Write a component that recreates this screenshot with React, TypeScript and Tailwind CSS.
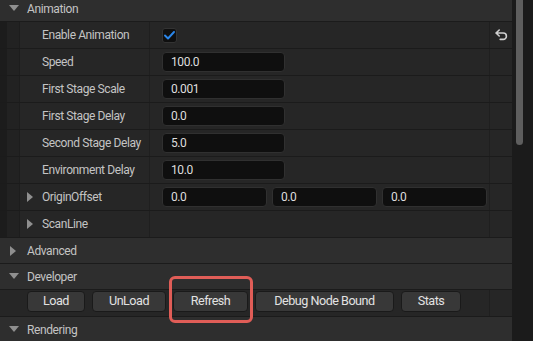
import React from "react";

const font = { fontFamily: "Roboto, 'Noto Sans', Arial, sans-serif" };

function TriDown() {
  return (
    <svg width="10" height="7" viewBox="0 0 10 7">
      <polygon points="0,0 10,0 5,6" fill="#8f8f8f" />
    </svg>
  );
}

function TriRight() {
  return (
    <svg width="7" height="10" viewBox="0 0 7 10">
      <polygon points="0,0 6,5 0,10" fill="#8f8f8f" />
    </svg>
  );
}

function ResetIcon() {
  return (
    <svg width="13" height="12" viewBox="0 0 13 12" fill="none">
      <path
        d="M4.2 1 L1 4 L4.2 7 M1.2 4 H8.2 A3.2 3.2 0 0 1 8.2 10.4 H5.2"
        stroke="#d0d0d0"
        strokeWidth="1.6"
        strokeLinecap="round"
        strokeLinejoin="round"
      />
    </svg>
  );
}

function Header({ title, open }: { title: string; open: boolean }) {
  return (
    <div className="flex items-center h-[26px] shrink-0 bg-[#2e2e2e] border-b border-[#1b1b1b]">
      <div className="w-[27px] flex justify-center">{open ? <TriDown /> : <TriRight />}</div>
      <span className="text-[12px] tracking-[-0.4px] text-[#c4c4c4]">{title}</span>
    </div>
  );
}

function Input({ value, w }: { value: string; w: string }) {
  return (
    <div
      className={`${w} h-[20px] flex items-center pl-[8px] rounded-[4px] bg-[#0f0f0f] border border-[#303030] text-[12px] tracking-[-0.4px] text-[#dedede]`}
    >
      {value}
    </div>
  );
}

function Row({
  label,
  expander,
  reset,
  children,
}: {
  label: string;
  expander?: boolean;
  reset?: boolean;
  children?: React.ReactNode;
}) {
  return (
    <div className="flex h-[27px] shrink-0 border-b border-[#1b1b1b]">
      <div className="w-[7px] bg-[#1c1c1c]" />
      <div className="w-[13px] bg-[#222222] border-r border-[#1d1d1d]" />
      <div className="w-[130px] flex items-center pl-[7px] bg-[#262626] border-r border-[#1f1f1f]">
        <div className="w-[15px] flex items-center">{expander && <TriRight />}</div>
        <span className="text-[12px] tracking-[-0.4px] text-[#c4c4c4] whitespace-nowrap">{label}</span>
      </div>
      <div className="w-[340px] flex items-center pl-[12px] gap-[5px] bg-[#262626] border-r border-[#1f1f1f]">
        {children}
      </div>
      <div className="w-[22px] flex items-center justify-center bg-[#262626]">
        {reset && <ResetIcon />}
      </div>
    </div>
  );
}

function Btn({ label, w, highlight }: { label: string; w: string; highlight?: boolean }) {
  return (
    <div className="relative">
      <div
        className={`${w} h-[21px] flex items-center justify-center rounded-[4px] bg-[#383838] border border-[#1a1a1a] text-[12.6px] tracking-[-0.5px] text-[#e2e2e2] whitespace-nowrap`}
      >
        {label}
      </div>
      {highlight && (
        <div className="absolute top-[-15px] bottom-[-11px] left-[-4px] right-[-5px] rounded-[6px] border-[3px] border-[#e05d57]" />
      )}
    </div>
  );
}

export default function App() {
  return (
    <div className="w-[533px] h-[341px] overflow-hidden flex bg-[#1b1b1b]" style={font}>
      <div className="w-[512px] flex flex-col">
        <div className="mt-[-4px]">
          <Header title="Animation" open />
        </div>
        <Row label="Enable Animation" reset>
          <div className="w-[15px] h-[15px] rounded-[3px] bg-[#0f0f0f] border border-[#333] flex items-center justify-center">
            <svg width="11" height="9" viewBox="0 0 11 9" fill="none">
              <path d="M1 4.5 L4 7.5 L10 1" stroke="#2a86ea" strokeWidth="1.9" strokeLinecap="round" strokeLinejoin="round" />
            </svg>
          </div>
        </Row>
        <Row label="Speed">
          <Input value="100.0" w="w-[123px]" />
        </Row>
        <Row label="First Stage Scale">
          <Input value="0.001" w="w-[123px]" />
        </Row>
        <Row label="First Stage Delay">
          <Input value="0.0" w="w-[123px]" />
        </Row>
        <Row label="Second Stage Delay">
          <Input value="5.0" w="w-[123px]" />
        </Row>
        <Row label="Environment Delay">
          <Input value="10.0" w="w-[123px]" />
        </Row>
        <Row label="OriginOffset" expander>
          <Input value="0.0" w="w-[105px]" />
          <Input value="0.0" w="w-[105px]" />
          <Input value="0.0" w="w-[105px]" />
        </Row>
        <Row label="ScanLine" expander />
        <Header title="Advanced" open={false} />
        <Header title="Developer" open />
        <div className="flex h-[27px] shrink-0 border-b border-[#1b1b1b] bg-[#262626]">
          <div className="w-[490px] flex items-start pt-[1px] pl-[27px] gap-[7px] border-r border-[#1f1f1f]">
            <Btn label="Load" w="w-[58px]" />
            <Btn label="UnLoad" w="w-[74px]" />
            <Btn label="Refresh" w="w-[75px]" highlight />
            <Btn label="Debug Node Bound" w="w-[139px]" />
            <Btn label="Stats" w="w-[60px]" />
          </div>
        </div>
        <Header title="Rendering" open />
      </div>
      <div className="w-[21px] pl-[4px]">
        <div className="w-[7px] h-[145px] rounded-b-[4px] bg-[#5e5e5e]" />
      </div>
    </div>
  );
}
